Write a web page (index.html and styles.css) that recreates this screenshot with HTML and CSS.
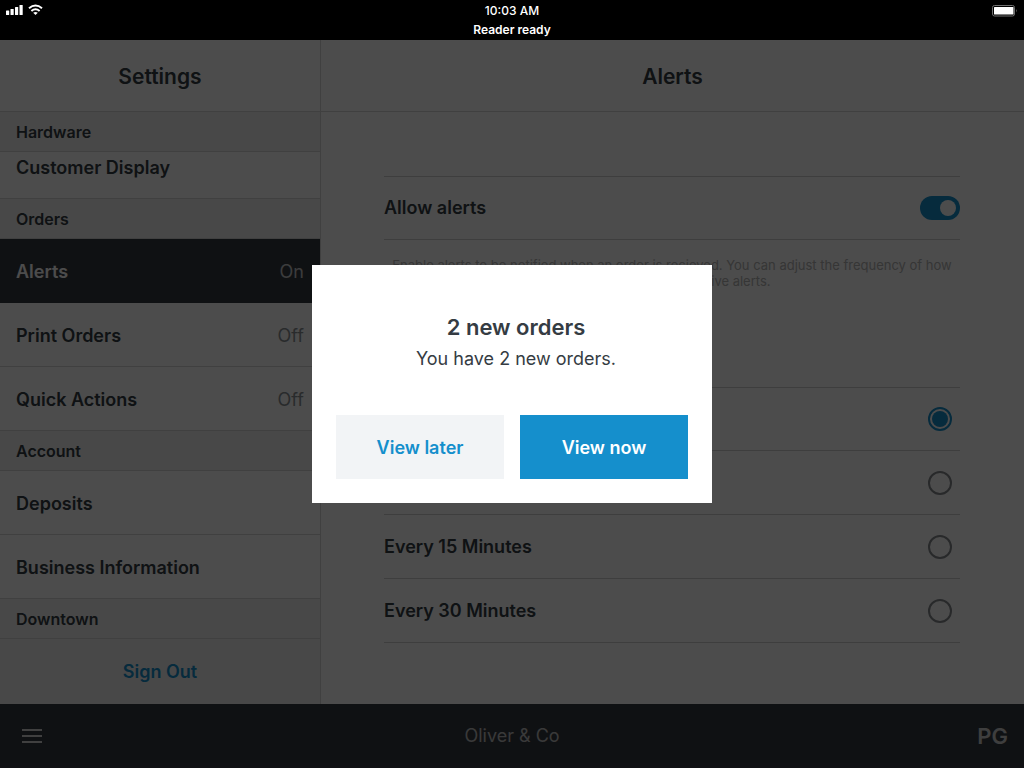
FILE: index.html
```html
<!DOCTYPE html>
<html lang="en">
<head>
<meta charset="utf-8">
<meta name="viewport" content="width=device-width, initial-scale=1">
<title>Settings – Alerts</title>
<link rel="stylesheet" href="styles.css">
</head>
<body>
<div class="app">
  <header class="status">
    <div class="status-icons">
      <svg width="18" height="11" viewBox="0 0 18 11" fill="#fff" aria-hidden="true"><rect x="0" y="6.500" width="3.200" height="4.500" rx=".6"/><rect x="4.500" y="5" width="3.200" height="6" rx=".6"/><rect x="9" y="3" width="3.200" height="8" rx=".6"/><rect x="13.500" y="1" width="3.200" height="10" rx=".6"/></svg>
      <svg width="15" height="11" viewBox="0 0 15 11" fill="none" stroke="#fff" stroke-width="2" aria-hidden="true"><path d="M1 4.200Q7.500-1.200 14 4.200M3.400 7Q7.500 3.600 11.600 7"/><path d="M7.500 11 5.200 8.800Q7.500 7 9.800 8.800Z" fill="#fff" stroke="none"/></svg>
    </div>
    <div class="status-text"><span>10:03 AM</span><strong>Reader ready</strong></div>
    <svg class="battery" width="26" height="12" viewBox="0 0 26 12" aria-hidden="true"><rect x=".5" y=".5" width="22" height="10.500" rx="2" fill="none" stroke="#707070"/><rect x="2" y="2" width="19.500" height="7.500" rx=".5" fill="#fff"/><path d="M24 4Q25.500 5.700 24 7.500Z" fill="#707070"/></svg>
  </header>

  <div class="workspace">
    <div class="panes">
      <aside class="sidebar">
        <h1 class="pane-title">Settings</h1>
        <nav class="menu">
          <h2 class="group">Hardware</h2>
          <a class="item item-scrolled" href="#display">Customer Display</a>
          <h2 class="group">Orders</h2>
          <a class="item item-active" href="#alerts">Alerts<span class="value">On</span></a>
          <a class="item" href="#print">Print Orders<span class="value">Off</span></a>
          <a class="item" href="#quick">Quick Actions<span class="value">Off</span></a>
          <h2 class="group">Account</h2>
          <a class="item" href="#deposits">Deposits</a>
          <a class="item" href="#business">Business Information</a>
          <h2 class="group">Downtown</h2>
          <button class="sign-out" type="button">Sign Out</button>
        </nav>
      </aside>
      <main class="detail">
        <h1 class="pane-title">Alerts</h1>
        <div class="content">
          <label class="option option-first">Allow alerts<input class="switch" type="checkbox" checked></label>
          <p class="note">Enable alerts to be notified when an order is recieved. You can adjust the frequency of how often you want to receive alerts.</p>
          <fieldset class="choices">
            <label class="option option-first"><input class="radio" type="radio" name="frequency" aria-label="Every Order" checked></label>
            <label class="option"><input class="radio" type="radio" name="frequency" aria-label="Every 5 Minutes"></label>
            <label class="option">Every 15 Minutes<input class="radio" type="radio" name="frequency"></label>
            <label class="option">Every 30 Minutes<input class="radio" type="radio" name="frequency"></label>
          </fieldset>
        </div>
      </main>
    </div>
    <footer class="bar">
      <button class="bar-menu" type="button" aria-label="Menu"><svg width="20" height="14" viewBox="0 0 20 14" fill="currentColor" aria-hidden="true"><path d="M0 0h20v2H0zM0 6h20v2H0zM0 12h20v2H0z"/></svg></button>
      <span class="bar-name">Oliver &amp; Co</span>
      <span class="bar-user">PG</span>
    </footer>
  </div>

  <div class="overlay">
    <section class="modal" role="dialog" aria-modal="true" aria-labelledby="modal-title">
      <div class="modal-copy">
        <h2 class="modal-title" id="modal-title">2 new orders</h2>
        <p class="modal-text">You have 2 new orders.</p>
      </div>
      <div class="modal-actions">
        <button class="btn" type="button">View later</button>
        <button class="btn btn-primary" type="button">View now</button>
      </div>
    </section>
  </div>
</div>
</body>
</html>
```
FILE: styles.css
```css
* { box-sizing: border-box; }
body {
  margin: 0;
  font: 500 18px/24px Inter, "Liberation Sans", sans-serif;
  color: #353c43;
}
h1, h2, p { margin: 0; }
button { font: inherit; border: 0; padding: 0; background: none; cursor: pointer; }
a { color: inherit; text-decoration: none; }

.app { position: relative; display: flex; flex-direction: column; min-height: 100vh; background: #fff; }

.status {
  position: relative;
  z-index: 2;
  display: grid;
  grid-template-columns: 1fr auto 1fr;
  height: 40px;
  padding: 0 6px;
  background: #000;
  color: #fff;
}
.status-icons { display: flex; gap: 4px; padding-top: 4px; }
.status-text { display: flex; flex-direction: column; align-items: center; padding-top: 1px; font-size: 12px; line-height: 19px; }
.status-text strong { font-weight: 600; }
.battery { justify-self: end; margin-top: 5px; }

.workspace { flex: 1; display: flex; flex-direction: column; }
.panes { flex: 1; display: grid; grid-template-columns: 321px 1fr; }
.sidebar { display: flex; flex-direction: column; border-right: 1px solid #d8d8d8; }
.pane-title {
  padding: 25px 0 22px;
  border-bottom: 1px solid #d8d8d8;
  font-size: 21px;
  line-height: 24px;
  font-weight: 600;
  text-align: center;
}

.menu { flex: 1; display: flex; flex-direction: column; }
.group {
  padding: 8px 16px 7px;
  border-bottom: 1px solid #d8d8d8;
  background: #f2f2f2;
  font-size: 16px;
  line-height: 24px;
  font-weight: 600;
}
.item {
  display: flex;
  align-items: center;
  justify-content: space-between;
  padding: 21px 16px 18px;
  border-bottom: 1px solid #d8d8d8;
  font-weight: 600;
}
.item-scrolled { padding-top: 4px; }
.item-active { background: #353a42; border-color: #353a42; color: #fff; }
.value { font-weight: 400; color: #8a8f94; }
.item-active .value { color: #c8cacc; }
.sign-out { flex: 1; min-height: 64px; background: #f2f2f2; color: #158fcc; font-weight: 600; }

.detail { display: flex; flex-direction: column; }
.content { padding: 64px 64px 32px 63px; }
.option {
  display: flex;
  align-items: center;
  justify-content: space-between;
  min-height: 64px;
  border-bottom: 1px solid #d0d0d0;
  font-weight: 600;
}
.option-first { border-top: 1px solid #d0d0d0; }
.note { margin: 17px 0 98px; font-size: 13px; line-height: 16px; font-weight: 400; text-align: center; color: #b4b4b4; }
.choices { margin: 0; padding: 0; border: 0; }

.switch {
  appearance: none;
  display: flex;
  justify-content: flex-end;
  width: 40px;
  height: 24px;
  margin: 0;
  padding: 4px;
  border-radius: 12px;
  background: #158fcc;
}
.switch::before { content: ""; width: 16px; height: 16px; border-radius: 50%; background: #fff; }
.radio {
  appearance: none;
  width: 24px;
  height: 24px;
  margin: 0 8px 0 auto;
  padding: 2px;
  border: 2px solid #85898e;
  border-radius: 50%;
}
.radio:checked { border-color: #158fcc; background: #158fcc content-box; }

.bar {
  display: grid;
  grid-template-columns: 1fr auto 1fr;
  align-items: center;
  height: 64px;
  padding: 0 16px;
  background: #353a42;
  color: #d0d0d0;
}
.bar-menu { display: flex; justify-self: start; padding: 6px; color: #d8d8d8; }
.bar-name { font-weight: 400; color: #c0c0c0; }
.bar-user { justify-self: end; font-size: 22px; font-weight: 600; }

.overlay {
  position: absolute;
  inset: 0;
  z-index: 1;
  display: flex;
  align-items: center;
  justify-content: center;
  background: rgba(0, 0, 0, 0.7);
}
.modal { width: 400px; padding: 48px 24px 24px; background: #fff; }
.modal-copy { padding-left: 8px; text-align: center; }
.modal-title { font-size: 22px; line-height: 28px; font-weight: 600; }
.modal-text { margin-bottom: 40px; padding-top: 2px; line-height: 32px; font-weight: 400; }
.modal-actions { display: grid; grid-template-columns: 1fr 1fr; gap: 16px; }
.btn { height: 64px; padding-top: 2px; background: #f2f4f6; color: #158fcc; font-weight: 600; }
.btn-primary { background: #158fcc; color: #fff; }
```
